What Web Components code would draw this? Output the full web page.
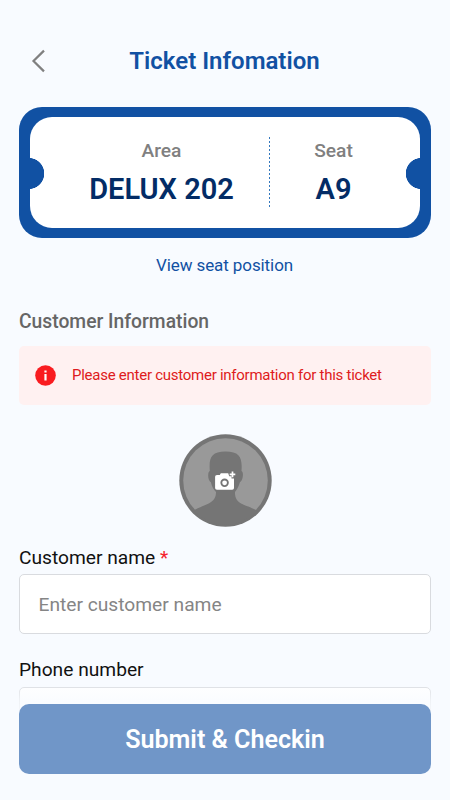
<!DOCTYPE html>
<html lang="en">
<head>
<meta charset="utf-8">
<title>Ticket Infomation</title>
<style>
html,body{margin:0;height:100%}
body{background:#f8fbff;font-family:Roboto,"Liberation Sans",sans-serif;color:#111;overflow:hidden}
</style>
</head>
<body>
<ticket-screen>
  <nav-header slot="header">Ticket Infomation</nav-header>
  <ticket-card>
    <ticket-field label="Area">DELUX 202</ticket-field>
    <ticket-field label="Seat">A9</ticket-field>
  </ticket-card>
  <text-link>View seat position</text-link>
  <section-title>Customer Information</section-title>
  <alert-box>Please enter customer information for this ticket</alert-box>
  <avatar-picker></avatar-picker>
  <form-field label="Customer name" required placeholder="Enter customer name"></form-field>
  <form-field label="Phone number"></form-field>
  <submit-button slot="footer">Submit &amp; Checkin</submit-button>
</ticket-screen>
<script>
const define = (name, html, setup) => {
  const t = document.createElement('template');
  t.innerHTML = html;
  customElements.define(name, class extends HTMLElement {
    connectedCallback() {
      if (this.shadowRoot) return;
      this.attachShadow({mode: 'open'}).append(t.content.cloneNode(true));
      if (setup) setup(this, this.shadowRoot);
    }
  });
};

define('ticket-screen', `<style>
:host{display:flex;flex-direction:column;position:relative;width:450px;height:800px;overflow:hidden;background:#f8fbff}
main{flex:1;min-height:0;overflow:hidden;padding:0 19px;display:flex;flex-direction:column}
main ::slotted(*){flex-shrink:0}
footer{position:absolute;left:0;right:0;bottom:0;padding:22px 19px 26.5px;background:linear-gradient(#f8fbff00,#f8fbffb0 18px,#f8fbff 40px)}
</style><slot name="header"></slot><main><slot></slot></main><footer><slot name="footer"></slot></footer>`);

define('nav-header', `<style>
:host{display:grid;grid-template-columns:60px 1fr 61px;align-items:start;height:106.5px;box-sizing:border-box;padding-top:16px}
svg{display:block;margin:33px 0 0 30px}
h1{margin:31px 0 0;text-align:center;font-size:24px;line-height:28px;font-weight:600;color:#1151a3}
</style><svg width="17" height="24" viewBox="0 0 17 24" fill="none" stroke="#808080" stroke-width="2.2"><path d="M14 1.6 3.5 12 14 22.4"/></svg><h1><slot></slot></h1>`);

define('ticket-card', `<style>
:host{display:block;box-sizing:border-box;height:131.5px;padding:10.5px 11px;border-radius:23px;background:#1151a3}
div{height:110.5px;border-radius:22px;display:grid;grid-template-columns:239px 1fr;
background:radial-gradient(circle at -1.3px 56.5px,#1151a3 15.2px,transparent 15.8px),radial-gradient(circle at calc(100% + 1.3px) 56.5px,#1151a3 15.2px,transparent 15.8px),repeating-linear-gradient(#3478bd 0 2px,#fff 2px 4px) 239px 20px/1px 72px no-repeat,#fff}
::slotted(:first-child){padding-left:24px}
::slotted(:last-child){padding-right:22px}
</style><div><slot></slot></div>`);

define('ticket-field', `<style>
:host{display:flex;flex-direction:column;align-items:center;padding-top:23px}
span{font-size:19.2px;line-height:22px;font-weight:500;color:#808080}
b{margin-top:9.5px;font-size:29px;line-height:34px;font-weight:600;color:#032c66}
</style><span></span><b><slot></slot></b>`, (el, r) => r.querySelector('span').textContent = el.getAttribute('label'));

define('text-link', `<style>
:host{display:block;text-align:center;margin-top:17px;padding-right:1px;font-size:17px;letter-spacing:-.09px;line-height:20px;color:#1151a3}
</style><slot></slot>`);

define('section-title', `<style>
:host{display:block;margin-top:36px;font-size:19.3px;line-height:22px;font-weight:500;color:#666}
</style><slot></slot>`);

define('alert-box', `<style>
:host{display:flex;align-items:center;box-sizing:border-box;height:59px;margin-top:13px;padding-left:16px;gap:16px;border-radius:5px;background:#fff1f1;color:#de1b20;font-size:15px;letter-spacing:-.26px}
span{padding-bottom:1px}
</style><svg width="21" height="21" viewBox="0 0 21 21"><circle cx="10.5" cy="10.5" r="10.3" fill="#f91c20"/><path d="M9.400 5.500h2.200v2.100H9.400zM9.400 9h2.200v6.400H9.400z" fill="#fff"/></svg><span><slot></slot></span>`);

define('avatar-picker', `<style>
:host{display:flex;justify-content:center;margin-top:28.5px;height:93px}
</style><svg width="93" height="93" viewBox="0 0 93 93">
<defs><clipPath id="disc"><circle cx="46.5" cy="46.5" r="44"/></clipPath></defs>
<circle cx="46.5" cy="46.5" r="46.2" fill="#757575"/><circle cx="46.5" cy="46.5" r="42.3" fill="#999"/>
<path clip-path="url(#disc)" fill="#757575" d="M30.8 37C29.8 24 32 17.5 46.5 17.5S63.5 24 62.5 37C65 37.5 64 47 61 48C59.5 53 57.5 56 56 58C55.5 72 69 70 80 78V94H12V78C24 70 37 71 37 58C35 56 33 53 31.8 48C28.8 47 28.3 37.500 30.8 37Z"/>
<path fill="#fff" fill-rule="evenodd" d="M38 41h2.8l1-1.8h7.4l1 3.1h2.3v2.1H55V54q0 1.8-1.8 1.8H38q-1.9 0-1.9-1.8V42.8Q36.100 41 38 41zM45.600 44.600a4.200 4.200 0 1 0 0 8.400a4.200 4.200 0 1 0 0-8.400zM45.600 46.400a2.400 2.400 0 1 1 0 4.800a2.400 2.400 0 1 1 0-4.800z"/>
<path d="M53.500 37.600v5.600M50.700 40.400h5.600" stroke="#fff" stroke-width="1.700"/>
</svg>`);

define('form-field', `<style>
:host{display:block;margin-top:19px}
label{display:block;font-size:19.2px;line-height:24px;color:#111}
i{font-style:normal;color:#f5222d}
input{display:block;box-sizing:border-box;width:100%;height:60px;margin-top:4.5px;padding:0 18.5px;border:1px solid #d9dbdf;border-radius:5px;background:#fff;font:19.2px Roboto,"Liberation Sans",sans-serif;outline:0}
input::placeholder{color:#858585;opacity:1}
:host(:last-of-type){margin-top:24px}
</style><label><span></span></label><input>`, (el, r) => {
  r.querySelector('span').textContent = el.getAttribute('label');
  if (el.hasAttribute('required')) {
    const i = document.createElement('i');
    i.textContent = ' *';
    r.querySelector('label').append(i);
  }
  r.querySelector('input').placeholder = el.getAttribute('placeholder') || '';
});

define('submit-button', `<style>
:host{display:block}
button{display:block;width:100%;height:69.5px;border:0;border-radius:10px;padding:1px 0 0;background:#7096c8;color:#fff;font:600 25.1px Roboto,"Liberation Sans",sans-serif}
</style><button><slot></slot></button>`);
</script>
</body>
</html>
